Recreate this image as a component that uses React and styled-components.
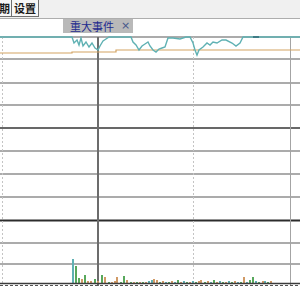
import React from "react";
import styled, { createGlobalStyle } from "styled-components";

const GlobalStyle = createGlobalStyle`
  html, body {
    margin: 0;
    padding: 0;
    background: #ffffff;
    overflow: hidden;
  }
  body {
    font-family: "Noto Sans CJK SC", "Noto Sans", sans-serif;
  }
`;

const TOP = 36; // page y of the chart's top edge
const CHART_H = 300 - TOP;

// price pane grid rows (page y), the middle one is the base price line
const priceRows = [37, 59, 83, 105, 128, 151, 174, 197];
const volumeRows = [243, 264];

const pricePoints = [
  [0, 37], [72, 37], [74, 43], [77, 40], [79, 45], [81, 38], [83, 46],
  [86, 42], [89, 47], [92, 43], [95, 48], [98, 50], [100, 46], [103, 41],
  [106, 39], [109, 37], [115, 37], [124, 37], [131, 37], [133, 42],
  [136, 45], [139, 50], [142, 46], [145, 44], [148, 42], [150, 46],
  [153, 50], [156, 52], [159, 49], [162, 48], [165, 47], [168, 38],
  [173, 38], [180, 39], [186, 37], [190, 37], [193, 43], [195, 50],
  [197, 55], [199, 50], [203, 47], [207, 43], [210, 45], [213, 42],
  [217, 43], [222, 40], [226, 40], [232, 43], [236, 46], [240, 43],
  [243, 37], [300, 37],
];

const avgPoints = [
  [0, 53], [72, 53], [72, 52], [116, 52], [116, 50], [300, 50],
];

const TEAL = "#5fb1b3";
const GREEN = "#58a85c";
const ORANGE = "#d19a66";

const bigBars = [
  [72, 259, TEAL], [75, 266, GREEN], [78, 278, GREEN], [81, 279, ORANGE],
  [84, 275, GREEN], [87, 281, ORANGE], [90, 281, ORANGE], [94, 279, GREEN],
  [97, 281, ORANGE], [101, 275, GREEN], [104, 277, ORANGE], [108, 282, GREEN],
  [111, 282, ORANGE], [114, 281, ORANGE], [116, 277, ORANGE], [120, 282, GREEN],
  [123, 276, GREEN], [126, 280, ORANGE], [130, 282, GREEN], [133, 282, ORANGE],
  [136, 282, GREEN], [139, 282, ORANGE], [142, 282, GREEN], [145, 282, ORANGE],
  [148, 281, TEAL], [151, 280, TEAL], [153, 279, ORANGE], [156, 280, ORANGE],
  [200, 280, ORANGE], [243, 277, ORANGE], [252, 277, GREEN], [262, 281, ORANGE],
];

const smallPattern = [1, 2, 1, 1, 2, 1, 3, 1, 2, 1, 1, 2];
const smallBars = [];
for (let x = 159, i = 0; x < 272; x += 3, i++) {
  if (bigBars.some((b) => Math.abs(b[0] - x) < 2)) continue;
  const colors = [GREEN, ORANGE, TEAL];
  smallBars.push([x, 283 - smallPattern[i % smallPattern.length], colors[i % 3]]);
}

const toLocal = (pts) => pts.map(([x, y]) => `${x},${y - TOP}`).join(" ");

export default function App() {
  return (
    <Page>
      <GlobalStyle />
      <TopBar>
        <Tab $first>期</Tab>
        <Tab>设置</Tab>
      </TopBar>
      <EventRow>
        <EventTab>
          重大事件<CloseMark>×</CloseMark>
        </EventTab>
      </EventRow>
      <ChartSvg width="300" height={CHART_H} viewBox={`0 0 300 ${CHART_H}`}>
        {priceRows.map((y) => (
          <line
            key={y}
            x1="0"
            x2="300"
            y1={y - TOP}
            y2={y - TOP}
            stroke={y === 128 ? "#686868" : "#ababab"}
            strokeWidth="2"
          />
        ))}
        {volumeRows.map((y) => (
          <line key={y} x1="0" x2="300" y1={y - TOP} y2={y - TOP} stroke="#ababab" strokeWidth="2" />
        ))}
        <line x1="0" x2="300" y1={220.5 - TOP} y2={220.5 - TOP} stroke="#2c2c2c" strokeWidth="2" />

        <line x1="2.5" x2="2.5" y1="1" y2={250} stroke="#c4c4c4" strokeDasharray="2 2" />
        <line x1="193.5" x2="193.5" y1="1" y2={250} stroke="#c4c4c4" strokeDasharray="2 2" />
        <line x1="98" x2="98" y1="1" y2={250} stroke="#6c6c6c" strokeWidth="2" />
        <line x1="290.5" x2="290.5" y1="1" y2={249} stroke="#a4a4a4" />

        {[...bigBars, ...smallBars].map(([x, top, color]) => (
          <rect key={x} x={x} y={top - TOP} width="2" height={283 - top} fill={color} />
        ))}

        <line x1="0" x2="300" y1={283.5 - TOP} y2={283.5 - TOP} stroke="#3a3a3a" strokeWidth="1.5" />
        <line x1="0" x2="300" y1={285.5 - TOP} y2={285.5 - TOP} stroke="#555" strokeDasharray="3 2" />

        <polyline points={toLocal(avgPoints)} fill="none" stroke="#d3a363" strokeWidth="1.2" />
        <polyline points={toLocal(pricePoints)} fill="none" stroke={TEAL} strokeWidth="1.4" />
        <line x1="253" x2="259" y1={37 - TOP} y2={37 - TOP} stroke="#2f6b78" strokeWidth="1.5" />
      </ChartSvg>
    </Page>
  );
}

const Page = styled.div`
  width: 300px;
  height: 300px;
  overflow: hidden;
  display: flex;
  flex-direction: column;
  background: #ffffff;
`;

const TopBar = styled.div`
  height: 18px;
  flex: none;
  display: flex;
  align-items: flex-start;
  background: #f0f0f0;
  overflow: hidden;
`;

const Tab = styled.div`
  height: 16px;
  line-height: 16px;
  padding: ${(p) => (p.$first ? "0 1px 0 0" : "0 2px")};
  margin-left: -1px;
  border: 1px solid #6f6f6f;
  border-top: none;
  border-left: ${(p) => (p.$first ? "none" : "1px solid #6f6f6f")};
  background: #f7f7f7;
  color: #1c1c1c;
  font-size: 11px;
  font-weight: 600;
  white-space: nowrap;
`;

const EventRow = styled.div`
  height: 17px;
  flex: none;
  border-top: 1px solid #adadad;
  display: flex;
  align-items: flex-start;
  padding-left: 63px;
`;

const EventTab = styled.div`
  height: 14px;
  width: 70px;
  box-sizing: border-box;
  padding-left: 7px;
  display: flex;
  align-items: center;
  background: #b9b9b9;
  color: #1d2a8e;
  font-size: 11px;
  line-height: 14px;
  white-space: nowrap;
`;

const CloseMark = styled.span`
  margin-left: 7px;
  color: #46568a;
  font-family: "DejaVu Sans", sans-serif;
  font-size: 11px;
`;

const ChartSvg = styled.svg`
  display: block;
  flex: none;
`;
